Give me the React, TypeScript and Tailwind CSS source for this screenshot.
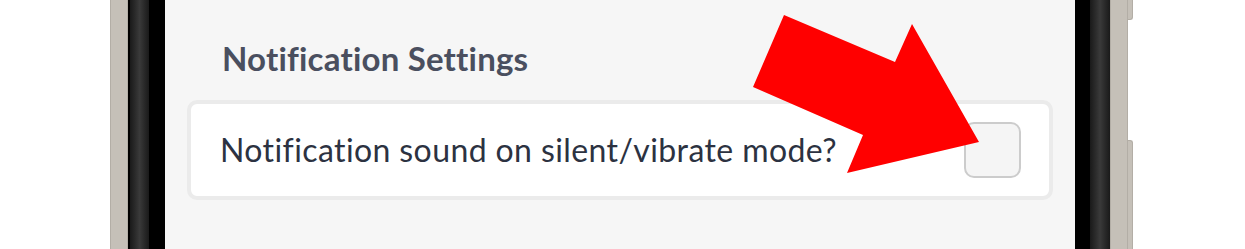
import React from "react";

export default function App() {
  return (
    <div className="relative w-[1245px] h-[249px] bg-white overflow-hidden flex [font-variant-ligatures:none]" style={{ fontFamily: "Lato, 'Noto Sans', sans-serif" }}>
      <div className="w-[110px] shrink-0" />
      {/* left frame */}
      <div className="w-[18px] shrink-0 bg-[#c5c0b8] border-l border-r border-[#b3aea6]" />
      <div className="w-[2px] shrink-0 bg-black" />
      <div className="w-[19px] shrink-0 bg-gradient-to-r from-[#1a1a1a] via-[#3a3a3a] to-[#1a1a1a]" />
      <div className="w-[16px] shrink-0 bg-black" />
      {/* content */}
      <div className="w-[910px] shrink-0 bg-[#f6f6f6] flex flex-col px-[22px]">
        <div className="h-[38px]" />
        <h2 className="pl-[35px] text-[33px] leading-[40px] font-bold text-[#4a4f5f] tracking-[0.2px]">Notification Settings</h2>
        <div className="h-[22px]" />
        <div className="h-[100px] rounded-[10px] border-[4px] border-[#ebebeb] bg-white flex items-center justify-between pl-[29px] pr-[28px]">
          <span className="text-[32px] text-[#2c3241] leading-none tracking-[0.4px]">Notification sound on silent/vibrate mode?</span>
          <div className="w-[57px] h-[56px] rounded-[10px] border-[2px] border-[#cccccc] bg-[#f5f5f5]" />
        </div>
      </div>
      {/* right frame */}
      <div className="w-[15px] shrink-0 bg-black" />
      <div className="w-[20px] shrink-0 bg-gradient-to-r from-[#1a1a1a] via-[#3a3a3a] to-[#1a1a1a]" />
      <div className="w-[18px] shrink-0 bg-[#c5c0b8] border-l border-r border-[#b3aea6]" />
      <div className="w-[5px] shrink-0 flex flex-col">
        <div className="h-[20px] bg-[#c5c0b8] rounded-br-[3px] border-r border-b border-[#b3aea6]" />
        <div className="h-[120px]" />
        <div className="flex-1 bg-[#c5c0b8] rounded-tr-[3px] border-r border-t border-[#b3aea6]" />
      </div>
      <svg className="absolute left-0 top-0" width="1245" height="249" viewBox="0 0 1245 249">
        <polygon points="784,15 895,62 912,24 979,142 847,173 863,135 753,87" fill="#ff0000" />
      </svg>
    </div>
  );
}
